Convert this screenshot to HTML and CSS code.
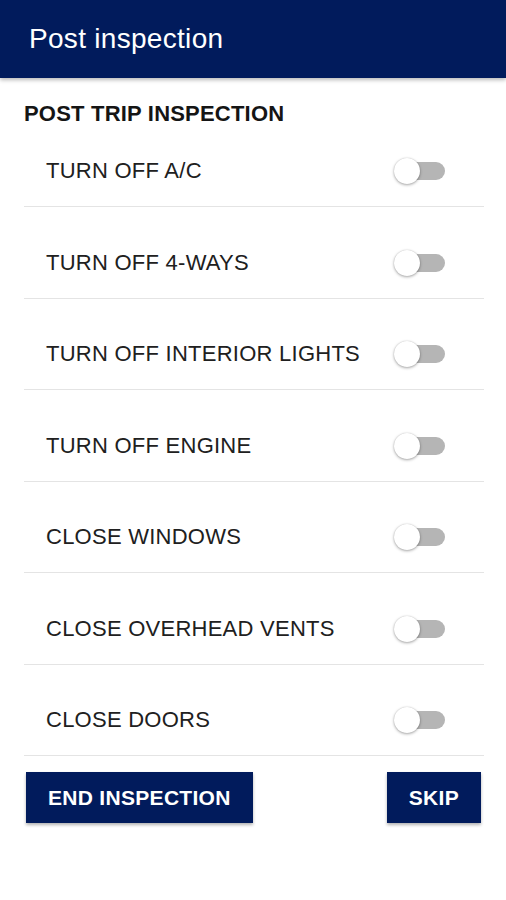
FILE: index.html
```html
<!DOCTYPE html>
<html>
<head>
<meta charset="utf-8">
<link rel="stylesheet" href="styles.css">
</head>
<body>
<header class="appbar"><h1 class="title">Post inspection</h1></header>
<main class="content">
  <h2 class="section">POST TRIP INSPECTION</h2>
  <ul class="list">
    <li class="row"><span class="label">TURN OFF A/C</span><span class="switch"><span class="track"></span><span class="thumb"></span></span></li>
    <li class="row"><span class="label">TURN OFF 4-WAYS</span><span class="switch"><span class="track"></span><span class="thumb"></span></span></li>
    <li class="row"><span class="label">TURN OFF INTERIOR LIGHTS</span><span class="switch"><span class="track"></span><span class="thumb"></span></span></li>
    <li class="row"><span class="label">TURN OFF ENGINE</span><span class="switch"><span class="track"></span><span class="thumb"></span></span></li>
    <li class="row"><span class="label">CLOSE WINDOWS</span><span class="switch"><span class="track"></span><span class="thumb"></span></span></li>
    <li class="row"><span class="label">CLOSE OVERHEAD VENTS</span><span class="switch"><span class="track"></span><span class="thumb"></span></span></li>
    <li class="row"><span class="label">CLOSE DOORS</span><span class="switch"><span class="track"></span><span class="thumb"></span></span></li>
  </ul>
  <div class="actions">
    <button class="btn">END INSPECTION</button>
    <button class="btn">SKIP</button>
  </div>
</main>
</body>
</html>
```
FILE: styles.css
```css
* { box-sizing: border-box; }
html, body { margin: 0; padding: 0; background: #fff; }
body { font-family: "Liberation Sans", Arial, sans-serif; width: 506px; height: 900px; overflow: hidden; }

.appbar {
  height: 78px;
  background: #011b5c;
  display: flex;
  align-items: center;
  padding-left: 29px;
  box-shadow: 0 2px 4px rgba(0,0,0,0.28);
  position: relative;
  z-index: 1;
}
.title {
  margin: 0;
  color: #fff;
  font-weight: 400;
  font-size: 28px;
  letter-spacing: 0.3px;
  line-height: 32px;
}

.content { padding: 0 22px 0 24px; }

.section {
  margin: 24px 0 0;
  font-size: 22px;
  letter-spacing: 0.2px;
  line-height: 24px;
  font-weight: 700;
  color: #151515;
}

.list { list-style: none; margin: 0; padding: 0; }
.row {
  display: flex;
  align-items: center;
  justify-content: space-between;
  height: 91.5px;
  padding: 20.5px 39px 0 22px;
  border-bottom: 1px solid #e4e4e4;
}
.row:first-child { height: 81px; padding-top: 10px; }
.label { font-size: 22px; letter-spacing: 0.25px; color: #202020; line-height: 24px; }

.switch { position: relative; width: 51px; height: 26px; display: block; }
.track {
  position: absolute;
  left: 3px; right: 0; top: 4px;
  height: 18px;
  border-radius: 9px;
  background: #b5b5b5;
}
.thumb {
  position: absolute;
  left: 0; top: 0;
  width: 26px; height: 26px;
  border-radius: 50%;
  background: #fff;
  box-shadow: 0 1px 3px rgba(0,0,0,0.35), 0 0 1px rgba(0,0,0,0.2);
}

.actions {
  display: flex;
  justify-content: space-between;
  padding: 16px 3px 0 2px;
}
.btn {
  height: 51px;
  padding: 0 22px;
  border: none;
  border-radius: 0;
  background: #011b5c;
  color: #fff;
  font-family: "Liberation Sans", Arial, sans-serif;
  font-weight: 700;
  font-size: 21px;
  letter-spacing: 0.3px;
  box-shadow: 0 2px 3px rgba(0,0,0,0.3);
}
```
